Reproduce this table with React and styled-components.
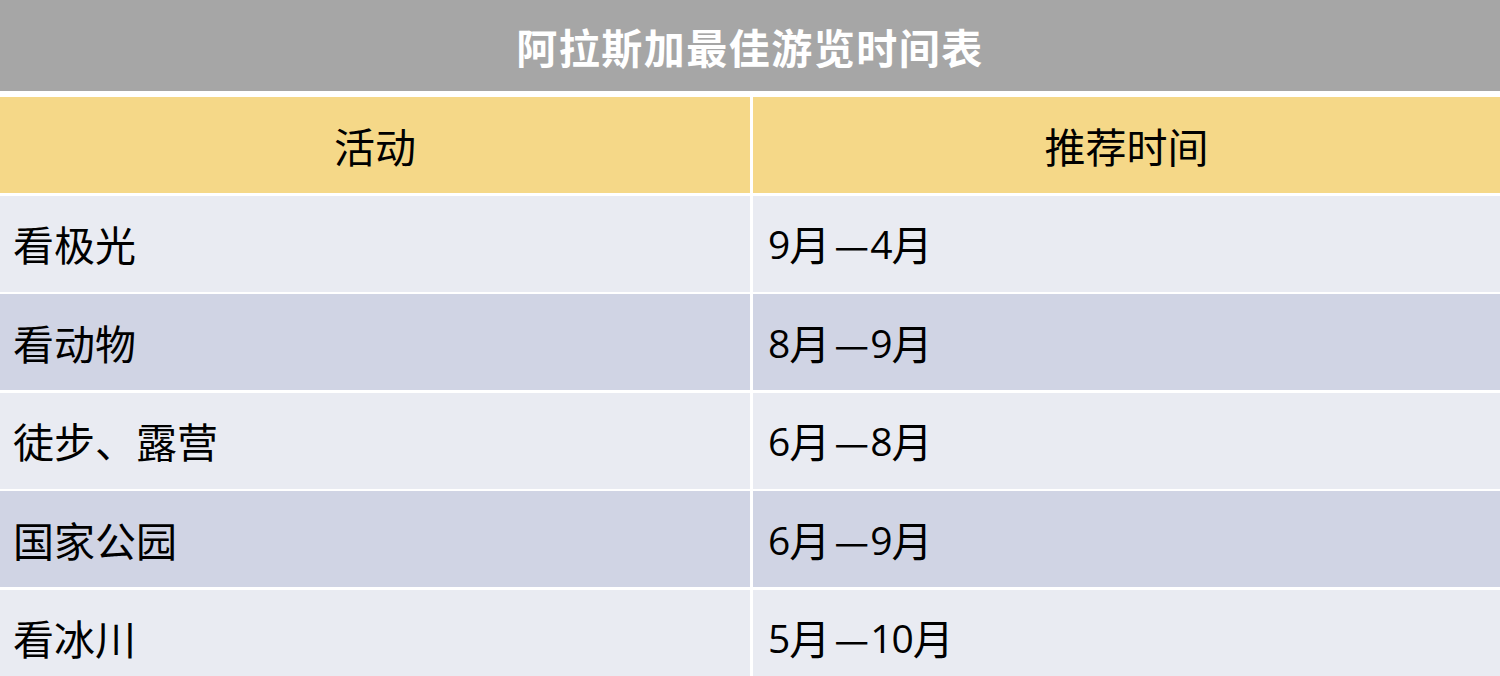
import { Fragment } from 'react';
import styled, { createGlobalStyle } from 'styled-components';

const GlobalStyle = createGlobalStyle`
    html, body {
        margin: 0;
        padding: 0;
        background: #ffffff;
        overflow: hidden;
    }
    body {
        font-family: "Noto Sans CJK SC", "Noto Sans", sans-serif;
    }
`

const Page = styled.div`
    width: 1500px;
    height: 676px;
    overflow: hidden;
    background: #ffffff;
`

const TitleBar = styled.div`
    height: 91px;
    background: #a6a6a6;
    color: #ffffff;
    font-size: 41px;
    font-weight: 700;
    display: flex;
    align-items: center;
    justify-content: center;
    letter-spacing: 1.5px;
    margin-bottom: 6px;
`

const Table = styled.div`
    display: grid;
    grid-template-columns: 750px 1fr;
    grid-auto-rows: 96px;
    column-gap: 3px;
    row-gap: 2.5px;
`

const Cell = styled.div`
    display: flex;
    align-items: center;
    justify-content: ${p => (p.$head ? 'center' : 'flex-start')};
    padding-left: ${p => (p.$head ? '0' : p.$first ? '13px' : '15px')};
    background: ${p => (p.$head ? '#f5d888' : p.$odd ? '#d0d4e4' : '#e9ebf2')};
    color: #000000;
    font-size: 41px;
    line-height: 1;
`

const Month = styled.span`
    font-family: "Open Sans", "Noto Sans CJK SC", sans-serif;
    font-size: 39px;
    letter-spacing: -1px;
`

const Dash = styled.span`
    font-size: 39px;
    margin: 0 1px 0 4px;
`

const rows = [
    ['看极光', '9', '4'],
    ['看动物', '8', '9'],
    ['徒步、露营', '6', '8'],
    ['国家公园', '6', '9'],
    ['看冰川', '5', '10'],
]

const App = () => {
    return (
        <Page>
            <GlobalStyle />
            <TitleBar>阿拉斯加最佳游览时间表</TitleBar>
            <Table>
                <Cell $head>活动</Cell>
                <Cell $head>推荐时间</Cell>
                {rows.map(([name, from, to], i) => (
                    <Fragment key={name}>
                        <Cell $first $odd={i % 2 === 1}>{name}</Cell>
                        <Cell $odd={i % 2 === 1}>
                            <Month>{from}</Month>月<Dash>—</Dash><Month>{to}</Month>月
                        </Cell>
                    </Fragment>
                ))}
            </Table>
        </Page>
    );
}

export default App;
